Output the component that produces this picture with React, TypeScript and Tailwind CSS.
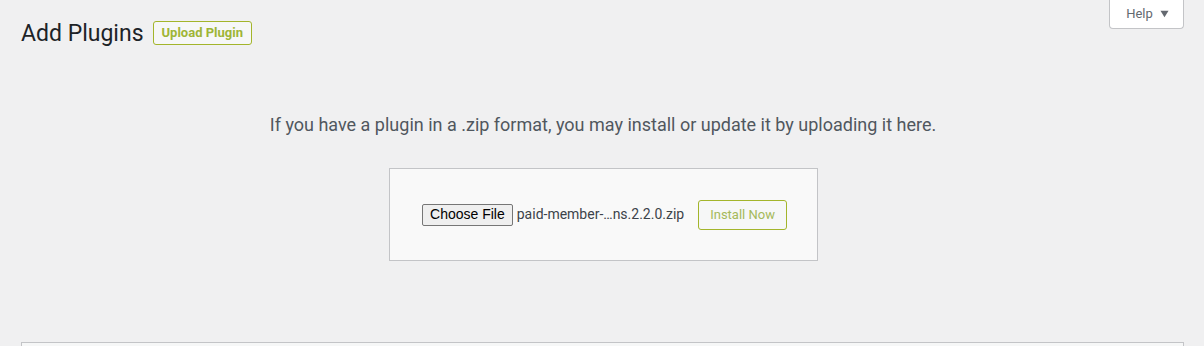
export default function App() {
  return (
    <div className="relative h-[346px] w-full overflow-hidden bg-[#f0f0f1] font-['Roboto',sans-serif] text-[#1d2327]">
      {/* Help tab */}
      <div className="absolute right-[20px] top-0">
        <button className="flex h-[29px] w-[75px] items-center justify-center gap-[7px] rounded-b-[4px] border border-t-0 border-[#c3c4c7] bg-white pl-[2px] text-[13px] text-[#646970]">
          <span>Help</span>
          <svg className="h-[8px] w-[9px]" viewBox="0 0 10 8">
            <path d="M0.5 0.5h9L5 7.5z" fill="#646970" />
          </svg>
        </button>
      </div>

      {/* Header */}
      <div className="flex items-center gap-[9px] pl-[21px] pt-[19px]">
        <h1 className="text-[23px] font-normal leading-[29px]">Add Plugins</h1>
        <button className="mt-[-2px] h-[24px] rounded-[3px] border border-[#a3b52b] bg-[#f6f7f7] px-[8px] text-[13px] font-bold text-[#9eb536]">
          Upload Plugin
        </button>
      </div>

      {/* Upload area */}
      <div className="flex flex-col items-center pt-[65px] pl-[2px]">
        <p className="text-[18px] leading-[24px] text-[#50575e]">
          If you have a plugin in a .zip format, you may install or update it by uploading it here.
        </p>
        <div className="mt-[31px] flex h-[93px] w-[429px] items-center justify-center border border-[#c3c4c7] bg-[#f9f9f9]">
          <div className="flex items-center pl-[3px]">
            <span className="flex h-[22px] items-center rounded-[2px] border border-[#767676] bg-[#efefef] px-[7px] font-['Liberation_Sans',sans-serif] text-[14px] text-black">
              Choose File
            </span>
            <span className="ml-[4px] text-[14px] text-[#3c434a]">
              paid-member-…ns.2.2.0.zip
            </span>
            <span className="ml-[14px] flex h-[30px] items-center rounded-[3px] border border-[#a3b52b] bg-[#f6f7f7] px-[11px] text-[13px] text-[#a5b95a]">
              Install Now
            </span>
          </div>
        </div>
      </div>

      {/* Next panel edge */}
      <div className="ml-[21px] mr-[20px] mt-[81px] h-[40px] border border-[#c3c4c7] bg-[#f6f7f7]" />
    </div>
  );
}
